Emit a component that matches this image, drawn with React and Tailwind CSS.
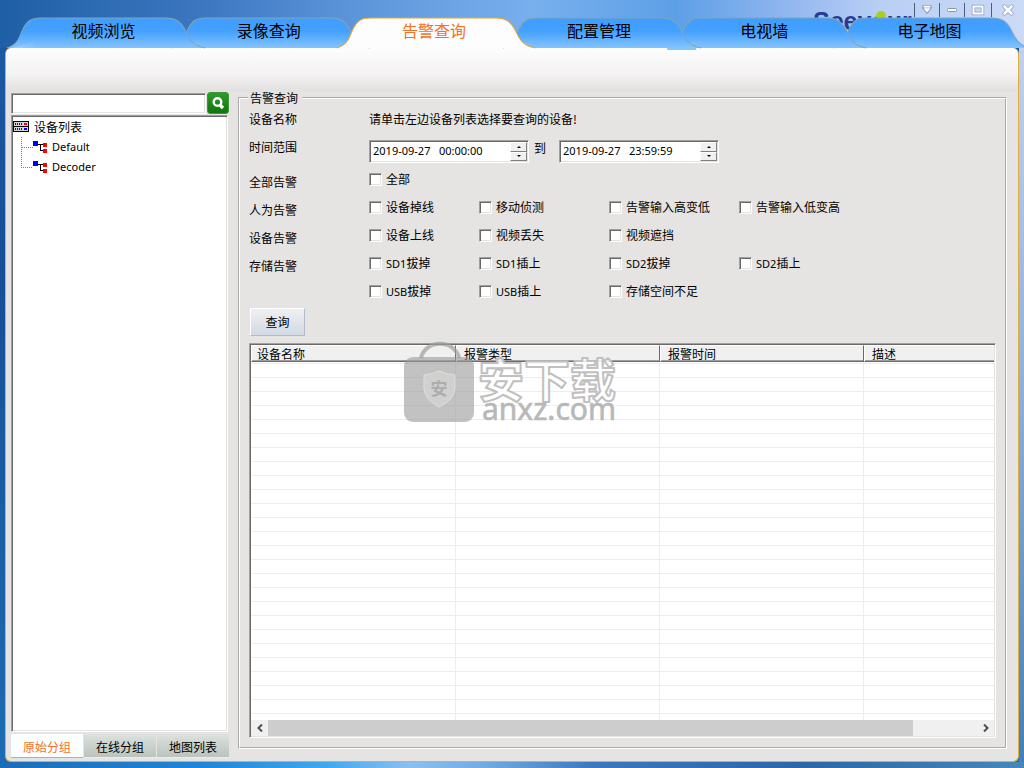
import React, { useState } from "react";

const tabs = [
  { name: "视频浏览", layer: "z-[6]" },
  { name: "录像查询", layer: "z-[5]" },
  { name: "告警查询", layer: "z-[9]" },
  { name: "配置管理", layer: "z-[4]", tail: true },
  { name: "电视墙", layer: "z-[3]" },
  { name: "电子地图", layer: "z-[2]" },
];

const alarmRows = [
  [["", "全部"]],
  [["", "设备掉线"], ["", "移动侦测"], ["", "告警输入高变低"], ["", "告警输入低变高"]],
  [["", "设备上线"], ["", "视频丢失"], ["", "视频遮挡"]],
  [["SD1", "拔掉"], ["SD1", "插上"], ["SD2", "拔掉"], ["SD2", "插上"]],
  [["USB", "拔掉"], ["USB", "插上"], ["", "存储空间不足"]],
];

const columns = ["设备名称", "报警类型", "报警时间", "描述"];
const groups = ["原始分组", "在线分组", "地图列表"];

const sunken =
  "border border-t-[#a0a0a0] border-l-[#a0a0a0] border-r-white border-b-white shadow-[inset_1px_1px_0_#696969,inset_-1px_-1px_0_#e3e3e3]";

function TopTab({ tab, active, onClick }) {
  const shape = "M-14 31C-2 27 -2 20 2 12C6 4 10 1 19 1H145C155 1 160 5 164 13C168 21 171 29 184 31";
  const edge = active ? "#e3a32f" : "#7fa6b4";
  return (
    <button
      onClick={onClick}
      className={`relative flex-1 h-[31px] pb-1 text-base leading-[27px] ${tab.layer} ${active ? "text-[#f4711f]" : "text-black"}`}
    >
      <svg
        className="absolute inset-0 w-full h-full overflow-visible"
        viewBox="0 0 165 31"
        preserveAspectRatio="none"
      >
        <defs>
          <linearGradient id="tabBlue" x1="0" y1="0" x2="0" y2="1">
            <stop offset="0" stopColor="#409dff" />
            <stop offset="0.45" stopColor="#45a1ff" />
            <stop offset="1" stopColor="#84c4ff" />
          </linearGradient>
          <linearGradient id="tabShine" x1="0" y1="0" x2="1" y2="0">
            <stop offset="0" stopColor="#fff" stopOpacity="0.25" />
            <stop offset="0.35" stopColor="#fff" stopOpacity="0" />
          </linearGradient>
        </defs>
        <path d={shape + "Z"} fill={active ? "#fdfdfd" : "url(#tabBlue)"} />
        {!active && <path d="M-8 31C6 27 22 22 34 12L60 14L40 31Z" fill="url(#tabShine)" />}
        {tab.tail && <path d="M150 30H179V33H150Z" fill="#86c5fd" />}
        <path d={shape} fill="none" stroke={edge} strokeWidth="1" />
      </svg>
      <span className="relative">{tab.name}</span>
    </button>
  );
}

function WindowButton({ label, className, children }) {
  return (
    <button
      aria-label={label}
      className={`h-[14px] flex items-center justify-center border-l border-[#4d5c78] ${className}`}
    >
      <svg width="14" height="12" viewBox="0 0 14 12" fill="none">
        {children}
      </svg>
    </button>
  );
}

function TitleBar() {
  return (
    <div className="h-[17px] flex justify-end pt-[3px]">
      <div className="relative w-[100px] h-[14px]">
        <svg className="absolute left-0 top-0 overflow-visible" width="100" height="32">
          <text x="-1" y="27" fontSize="25" fontWeight="700" fill="#263c90" fontFamily="Liberation Sans, sans-serif">
            Seeyour
          </text>
          <circle cx="67" cy="13" r="5" fill="#a9cf1e" />
        </svg>
      </div>
      <WindowButton label="菜单" className="w-[25px]">
        <path d="M3 2H11V4L7 9L3 4Z" stroke="#8796b8" strokeWidth="1.4" strokeLinejoin="round" />
        <path d="M3.5 2.5H10.5" stroke="#fff" strokeWidth="1.4" />
        <path d="M3.5 4.5H10.5L7 8.5Z" fill="#fff" />
      </WindowButton>
      <WindowButton label="最小化" className="w-[25px]">
        <rect x="2.5" y="4.5" width="9" height="3" rx="1" fill="#fff" stroke="#8796b8" />
      </WindowButton>
      <WindowButton label="最大化" className="w-[27px]">
        <rect x="2.5" y="2.5" width="9" height="7" stroke="#8796b8" strokeWidth="3.4" />
        <rect x="2.5" y="2.5" width="9" height="7" stroke="#fff" strokeWidth="2" />
      </WindowButton>
      <WindowButton label="关闭" className="w-[33px]">
        <path d="M3.5 2.5L10.5 9.5M10.5 2.5L3.5 9.5" stroke="#8796b8" strokeWidth="4" strokeLinecap="round" />
        <path d="M3.5 2.5L10.5 9.5M10.5 2.5L3.5 9.5" stroke="#fff" strokeWidth="2.8" strokeLinecap="round" />
      </WindowButton>
    </div>
  );
}

function TreeItem({ name, last }) {
  return (
    <li className="h-5 flex items-center pl-2">
      <svg width="28" height="20" viewBox="0 0 28 20" shapeRendering="crispEdges">
        <path
          d={last ? "M0.5 0V10.5H12" : "M0.5 0V20M0.5 10.5H12"}
          fill="none"
          stroke="#808080"
          strokeDasharray="1 1"
        />
        <rect x="12" y="4" width="5" height="5" fill="#0000ff" />
        <path d="M17 7.5H22M19.5 7V13.5H22" fill="none" stroke="#000" />
        <rect x="22" y="6" width="4" height="4" fill="#f00" />
        <rect x="22" y="12" width="4" height="4" fill="#f00" />
      </svg>
      <span className="pl-[3px] font-['Noto_Sans','Noto_Sans_CJK_SC',sans-serif] text-[11px]">{name}</span>
    </li>
  );
}

function DevicePane() {
  const [group, setGroup] = useState(0);
  return (
    <aside className="w-[218px] shrink-0 flex flex-col">
      <div className="flex h-[22px]">
        <input aria-label="搜索设备" className={`flex-1 min-w-0 mt-px bg-white px-1 outline-none ${sunken}`} />
        <button
          aria-label="搜索"
          className="ml-px w-[22px] h-[22px] rounded-[3px] flex items-center justify-center bg-gradient-to-b from-[#2f9a2b] to-[#0f7610] border border-[#3d9838]"
        >
          <svg width="14" height="14" viewBox="0 0 14 14" fill="none" stroke="#fff">
            <circle cx="6.5" cy="6" r="3.8" strokeWidth="2.4" />
            <path d="M9 9L12 12" strokeWidth="3.2" />
          </svg>
        </button>
      </div>

      <div className={`flex-1 mt-px mr-px bg-white p-px ${sunken}`}>
        <div className="h-5 flex items-center">
          <svg width="17" height="12" viewBox="0 0 17 12" shapeRendering="crispEdges">
            <rect x="0.5" y="0.5" width="15" height="10" fill="#d8d4dc" stroke="#000" />
            <path d="M0 5.5H16" stroke="#000" />
            <path d="M2 3H10M2 8H10" stroke="#222" strokeWidth="2" strokeDasharray="1 1" />
            <rect x="11" y="2" width="3" height="2" fill="#f00" />
            <rect x="11" y="7" width="3" height="2" fill="#00f" />
          </svg>
          <span className="pl-1">设备列表</span>
        </div>
        <ul>
          <TreeItem name="Default" />
          <TreeItem name="Decoder" last />
        </ul>
      </div>

      <div className="mt-[2px] flex h-6 gap-px">
        {groups.map((g, i) => (
          <button
            key={g}
            onClick={() => setGroup(i)}
            className={
              i === group
                ? "flex-1 pt-[2px] bg-[#fbffff] border-b border-[#f59a62] text-[#f4711f]"
                : "flex-1 pt-[2px] bg-gradient-to-b from-[#dde2de] to-[#b9c4bd] border-b border-[#e9eeea] text-black"
            }
          >
            {g}
          </button>
        ))}
      </div>
    </aside>
  );
}

function DateField({ label, value }) {
  const spin =
    "flex-1 bg-[#f0f0f0] border border-t-white border-l-white border-r-[#808080] border-b-[#808080] flex items-center justify-center";
  return (
    <div className={`w-[160px] h-[23px] flex bg-white p-px ${sunken}`}>
      <input
        aria-label={label}
        defaultValue={value}
        className="flex-1 min-w-0 pl-[2px] pb-[2px] bg-transparent outline-none whitespace-pre font-['Noto_Sans',sans-serif] text-[11px] leading-4"
      />
      <div className="w-[17px] flex flex-col">
        <button aria-label={label + "增加"} className={spin}>
          <svg width="4" height="2" viewBox="0 0 4 2"><path d="M0 2L2 0L4 2Z" /></svg>
        </button>
        <button aria-label={label + "减少"} className={spin}>
          <svg width="4" height="2" viewBox="0 0 4 2"><path d="M0 0H4L2 2Z" /></svg>
        </button>
      </div>
    </div>
  );
}

function AlarmCheck({ prefix, text }) {
  return (
    <label className="flex items-center h-7 gap-1">
      <input type="checkbox" className={`appearance-none w-[13px] h-[13px] bg-white checked:bg-[#5a8fd0] ${sunken}`} />
      <span>
        {prefix && <span className="font-['Noto_Sans',sans-serif] text-[11px]">{prefix}</span>}
        {text}
      </span>
    </label>
  );
}

function Watermark() {
  return (
    <svg
      className="absolute left-[153px] top-[-3px] pointer-events-none overflow-visible"
      width="220"
      height="90"
      viewBox="0 0 220 90"
      fontFamily="Noto Sans CJK SC, sans-serif"
    >
      <path d="M18 17C22 -2 52 -2 56 17" fill="none" stroke="#9c9c9c" strokeOpacity="0.7" strokeWidth="4" />
      <rect x="1" y="16" width="70" height="65" rx="9" fill="#9a9a9a" fillOpacity="0.6" />
      <path
        d="M21 34Q30 33 36 30Q43 33 52 34V48Q51 59 36 66Q22 59 21 48Z"
        fill="#d0d0ce"
        stroke="#dededc"
        strokeWidth="1"
      />
      <text x="36" y="54" fontSize="17" fontWeight="700" textAnchor="middle" fill="#adadad">
        安
      </text>
      <text
        x="75"
        y="56"
        fontSize="46"
        fontWeight="700"
        fill="#fff"
        fillOpacity="0.85"
        stroke="#c0c0c0"
        strokeWidth="2"
        strokeLinejoin="round"
      >
        安下载
      </text>
      <text x="79" y="79" fontSize="30" fill="#b8b8b8" stroke="#b8b8b8" strokeWidth="0.6" fontFamily="Noto Sans, sans-serif">
        anxz.com
      </text>
    </svg>
  );
}

function ResultList() {
  const rows = Array.from({ length: 27 }, (_, i) => i);
  const rowHeight = (i) => (i === 0 ? "h-[2px]" : i === 26 ? "h-[6px]" : "h-[14px]");
  return (
    <div className={`relative flex-1 mt-[7px] flex flex-col bg-white p-px ${sunken}`}>
      <table className="w-full table-fixed border-separate border-spacing-0">
        <colgroup>
          <col className="w-[205px]" />
          <col className="w-[204px]" />
          <col className="w-[204px]" />
          <col />
        </colgroup>
        <thead>
          <tr>
            {columns.map((c, i) => (
              <th
                key={c}
                className={`h-[17px] p-0 text-left font-normal leading-[14px] bg-[#f0f0f0] border-t border-l border-t-white border-l-white border-b border-b-[#696969] shadow-[inset_0_-1px_0_#a0a0a0] ${
                  i === 0 ? "pl-[5px]" : "pl-[7px]"
                } ${i < 3 ? "border-r border-r-[#696969]" : ""}`}
              >
                {c}
              </th>
            ))}
          </tr>
        </thead>
        <tbody>
          {rows.map((i) => (
            <tr key={i}>
              {columns.map((c, n) => (
                <td
                  key={c}
                  className={`p-0 border-[#ededed] ${rowHeight(i)} ${i < 26 ? "border-b" : ""} ${n < 3 ? "border-r" : ""}`}
                />
              ))}
            </tr>
          ))}
        </tbody>
      </table>

      <div className="mt-auto h-4 flex bg-[#f0f0f0]">
        <button aria-label="向左滚动" className="w-[17px] flex items-center justify-center">
          <svg width="8" height="8" viewBox="0 0 8 8" fill="none" stroke="#505050" strokeWidth="2">
            <path d="M6 0.5L2.5 4L6 7.5" />
          </svg>
        </button>
        <div className="flex-1">
          <div className="w-[91%] h-full bg-[#cdcdcd]" />
        </div>
        <button aria-label="向右滚动" className="w-[17px] flex items-center justify-center">
          <svg width="8" height="8" viewBox="0 0 8 8" fill="none" stroke="#505050" strokeWidth="2">
            <path d="M2 0.5L5.5 4L2 7.5" />
          </svg>
        </button>
      </div>
      <Watermark />
    </div>
  );
}

function AlarmQuery() {
  return (
    <fieldset className="flex-1 min-w-0 flex flex-col -mt-[2px] ml-[9px] mr-[11px] mb-[9px] border-2 [border-style:groove] border-white px-[9px] pb-[9px]">
      <legend className="leading-4 pl-[2px] pr-1 -ml-px">告警查询</legend>
      <div className="flex">
        <div className="w-[120px] leading-7">
          <p className="leading-[26px]">设备名称</p>
          <p className="mt-px">时间范围</p>
          <p className="mt-[7px]">全部告警</p>
          <p>人为告警</p>
          <p>设备告警</p>
          <p>存储告警</p>
        </div>
        <div>
          <p className="leading-[26px]">请单击左边设备列表选择要查询的设备!</p>
          <div className="mt-2 mb-[2px] flex">
            <DateField label="开始时间" value="2019-09-27   00:00:00" />
            <span className="w-[30px] pl-[5px] leading-4">到</span>
            <DateField label="结束时间" value="2019-09-27   23:59:59" />
          </div>
          {alarmRows.map((row, i) => (
            <div key={i} className="grid grid-cols-[110px_130px_130px_110px]">
              {row.map(([prefix, text]) => (
                <AlarmCheck key={prefix + text} prefix={prefix} text={text} />
              ))}
            </div>
          ))}
        </div>
      </div>
      <button className="mt-[3px] ml-px w-[55px] h-7 shrink-0 self-start border border-t-white border-l-white border-r-[#b3bbca] border-b-[#b3bbca] bg-gradient-to-b from-[#f0f0f1] to-[#d2dae5]">
        查询
      </button>
      <ResultList />
    </fieldset>
  );
}

export default function App() {
  const [current, setCurrent] = useState(2);

  return (
    <div className="min-h-screen flex flex-col text-xs text-black font-['Noto_Sans_CJK_SC',sans-serif] [background:linear-gradient(to_right,#1c6cb8,#1f86d8_20%,#3fa9f0_32%,#8cc0f0_40%,#6fa8e0_48%,#3a78bf_58%,#2b66a8_78%,#4488b8)_bottom/100%_6px_no-repeat,linear-gradient(to_bottom,#c8d6f2,#8fb0de_50%,#3f7fb8)_right/5px_100%_no-repeat,linear-gradient(to_bottom,#1b5ba6,#164f96_35%,#1c6cb4)]">
      <header className="relative z-10 bg-[linear-gradient(to_right,#1f5fa6,#3c77c0_20%,#5a92d8_33%,#78b0ee_52%,#5d9fe6_66%,#8db4ee_76%,#b9cff4_86%,#cbdaf6)]">
        <TitleBar />
        <nav className="flex pl-[21px] pr-3">
          {tabs.map((tab, i) => (
            <TopTab key={tab.name} tab={tab} active={i === current} onClick={() => setCurrent(i)} />
          ))}
        </nav>
      </header>
      <main className="flex-1 flex mx-[5px] mb-[6px] pt-11 pl-[5px] rounded-md border border-t-0 border-[#dfae3c] bg-[#e5e4e2] bg-[linear-gradient(to_bottom,#fdfdfd,#f3f1f2_27px,#e2e1df_43px,#e5e4e2_44px)]">
        <div className="flex pb-[3px]">
          <DevicePane />
        </div>
        <div className="flex-1 min-w-0 flex pb-[3px]">
          <AlarmQuery />
        </div>
      </main>
    </div>
  );
}
